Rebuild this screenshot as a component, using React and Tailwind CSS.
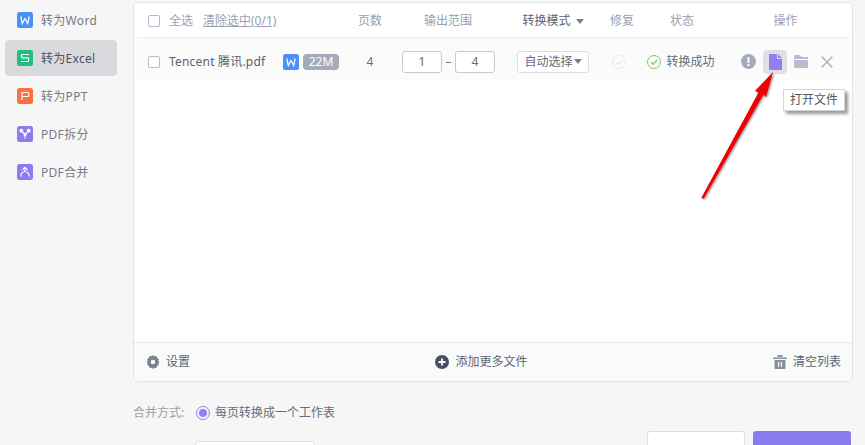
import React from 'react';

const rowCols = 'grid grid-cols-[205px_56px_100px_110px_28px_92px_121px] items-center';

function BadgeIcon({ color, children, size = 16 }) {
  return (
    <svg width={size} height={size} viewBox="0 0 16 16" className="shrink-0">
      <rect width="16" height="16" rx="2.5" fill={color} />
      <g fill="none" stroke="#fff" strokeWidth="1.2">{children}</g>
    </svg>
  );
}

const WordGlyph = <path d="M3.800 4.500 5.300 11.500 8 6.500 10.700 11.500 12.200 4.500" />;
const ExcelGlyph = <path d="M12 4.500H5.500Q4.300 4.500 4.300 6T5.500 7.800H10.500Q11.800 7.800 11.800 9.500T10.500 11.500H4" />;
const PptGlyph = <path d="M5 12V4.500h5.500Q12 4.500 12 6.500T10.500 8.500H5" />;
const SplitGlyph = (
  <>
    <path d="M5 5.500 8 8.500 11 5.500M8 8.500v4" />
    <circle cx="4.300" cy="4.600" r="1.300" fill="#fff" />
    <circle cx="11.700" cy="4.600" r="1.300" fill="#fff" />
    <circle cx="8" cy="8.500" r="1" fill="#fff" />
  </>
);
const MergeGlyph = (
  <>
    <path d="M5.500 5.800 8 3.500 10.500 5.800" />
    <path d="M8 3.500V7M3.800 12.500C3.800 9.500 6 7.500 8 7.500S12.200 9.500 12.200 12.500" />
  </>
);

const navItems = [
  { label: '转为Word', color: '#4a90f7', glyph: WordGlyph },
  { label: '转为Excel', color: '#1fbd80', glyph: ExcelGlyph, active: true },
  { label: '转为PPT', color: '#fb7043', glyph: PptGlyph },
  { label: 'PDF拆分', color: '#8b7cf0', glyph: SplitGlyph },
  { label: 'PDF合并', color: '#8b7cf0', glyph: MergeGlyph },
];

function Checkbox() {
  return <span className="w-3 h-3 rounded-[2px] border border-[#b4b8c8] bg-white shrink-0" />;
}

function Caret() {
  return <span className="w-0 h-0 border-x-[4.500px] border-x-transparent border-t-[5px] border-t-[#7c7f88]" />;
}

function RangeBox({ value }) {
  return (
    <span className="w-10 h-[22px] flex items-center justify-center rounded-[3px] border border-[#c8c9cf] bg-white text-[#666b76]">
      {value}
    </span>
  );
}

export default function App() {
  return (
    <div className="relative flex h-[445px] w-[865px] overflow-hidden bg-[#f6f6f6] text-xs text-[#666b78] font-['Noto_Sans','Noto_Sans_CJK_SC',sans-serif]">
      <aside className="w-[133px] shrink-0 pt-[2px] pl-[5px]">
        <nav className="flex flex-col gap-[2px]">
          {navItems.map((item) => (
            <div
              key={item.label}
              className={`w-[112px] h-9 flex items-center gap-2 pl-3 rounded-[4px] ${item.active ? 'bg-[#d9dade] text-[#4d515c]' : 'text-[#777b87]'}`}
            >
              <BadgeIcon color={item.color}>{item.glyph}</BadgeIcon>
              <span className="pt-[1px] tracking-[0.3px]">{item.label}</span>
            </div>
          ))}
        </nav>
      </aside>

      <main className="w-[720px] pt-[2px] shrink-0">
        <section className="h-[380px] flex flex-col rounded-[5px] border border-[#e3e3e3] bg-white overflow-hidden">
          <div className={`${rowCols} h-[35px] pt-[2px] mx-[3px] border-b border-[#ececee] text-[#9aa0b0]`}>
            <div className="flex items-center pl-[11px]">
              <Checkbox />
              <span className="ml-[9px]">全选</span>
              <span className="ml-[10px] underline">清除选中(0/1)</span>
            </div>
            <span className="text-center">页数</span>
            <span className="text-center">输出范围</span>
            <span className="flex items-center justify-center gap-[5px] text-[#5f636e]">转换模式<Caret /></span>
            <span className="text-center">修复</span>
            <span className="text-center">状态</span>
            <span className="text-center pr-[6px]">操作</span>
          </div>

          <div className={`${rowCols} h-[43px] pt-[4px] mx-[3px] bg-[#fbfbfc]`}>
            <div className="flex items-center pl-[11px]">
              <Checkbox />
              <span className="ml-[9px] w-[105px] shrink-0 whitespace-nowrap tracking-[0.2px] text-[#5c5f70]">Tencent 腾讯.pdf</span>
              <span className="ml-[9px]"><BadgeIcon color="#4a90f7">{WordGlyph}</BadgeIcon></span>
              <span className="ml-[4px] w-9 h-4 rounded-[4px] bg-[#a5abbb] text-white flex items-center justify-center">22M</span>
            </div>
            <span className="text-center text-[#6a6e78]">4</span>
            <div className="flex items-center justify-center gap-[1px] pl-[1px]">
              <RangeBox value="1" />
              <span className="w-[11px] text-center text-[#777]">–</span>
              <RangeBox value="4" />
            </div>
            <div className="flex justify-center">
              <span className="w-[72px] h-[22px] rounded-[3px] border border-[#dcdde0] bg-white flex items-center justify-center gap-[1px]">
                自动选择<Caret />
              </span>
            </div>
            <div className="flex justify-center pr-[6px]">
              <svg width="14" height="14" viewBox="0 0 14 14" fill="none" stroke="#e6e7ec" strokeWidth="1">
                <circle cx="7" cy="7" r="6.500" />
                <path d="M4 7.200 6.200 9.300 10 5" strokeWidth="1.300" />
              </svg>
            </div>
            <div className="flex items-center justify-center gap-[5px] pr-[2px]">
              <svg width="14" height="14" viewBox="0 0 14 14" fill="none" stroke="#7fc46f" strokeWidth="1">
                <circle cx="7" cy="7" r="6.500" />
                <path d="M4 7.200 6.200 9.300 10 5" strokeWidth="1.200" />
              </svg>
              <span>转换成功</span>
            </div>
            <div className="flex items-center pl-[13px]">
              <svg width="15" height="15" viewBox="0 0 15 15">
                <circle cx="7.500" cy="7.500" r="7.500" fill="#a5abbe" />
                <rect x="6.500" y="3" width="2" height="6" rx="0.500" fill="#fff" />
                <rect x="6.500" y="10" width="2" height="2" fill="#fff" />
              </svg>
              <span className="ml-[7px] w-6 h-6 rounded-[4px] bg-[#dfe0e4] flex items-center justify-center">
                <svg width="13" height="16" viewBox="0 0 13 16">
                  <path d="M0 0h8v5h5v11H0z" fill="#927df6" />
                  <path d="M9 0l4 4H9z" fill="#927df6" />
                </svg>
              </span>
              <svg width="15" height="13" viewBox="0 0 15 13" className="ml-[7px]">
                <path d="M0 0h6l1.500 2H14v2H0zM0 5h14v8H0z" fill="#b6bccd" />
              </svg>
              <svg width="12" height="12" viewBox="0 0 12 12" className="ml-[12px]" fill="none" stroke="#b6bccd" strokeWidth="1.800">
                <path d="M.7.7l10.600 10.600M11.300.7.700 11.300" />
              </svg>
            </div>
          </div>

          <div className="flex-1" />

          <footer className="h-[39px] flex items-center justify-between pl-3 pr-[11px] bg-[#f9fafa] border-t border-[#e8e8e8] text-[#5e6474]">
            <div className="flex items-center gap-[6px]">
              <svg width="14" height="14" viewBox="0 0 14 14">
                <path
                  fillRule="evenodd"
                  d="M7 0l1.400 1.300 2-.2.600 1.900 1.800.9-.5 1.900L13.500 7l-1.200 1.200.5 1.900-1.800.9-.6 1.900-2-.2L7 14l-1.400-1.300-2 .2-.6-1.900-1.800-.9.500-1.900L.5 7l1.200-1.200-.5-1.900L3 3l.6-1.900 2 .2zM7 4.700a2.300 2.300 0 1 0 0 4.600 2.300 2.300 0 0 0 0-4.600z"
                  fill="#79808f"
                />
              </svg>
              <span>设置</span>
            </div>
            <div className="flex items-center gap-[6px]">
              <svg width="14" height="14" viewBox="0 0 14 14">
                <circle cx="7" cy="7" r="7" fill="#475069" />
                <path d="M3.500 7h7M7 3.500v7" stroke="#fff" strokeWidth="1.800" />
              </svg>
              <span>添加更多文件</span>
            </div>
            <div className="flex items-center gap-[6px]">
              <svg width="14" height="14" viewBox="0 0 14 14" fill="#8a90a2">
                <path d="M0 2.500h14V4H0zM4.500 0h5v2h-5z" />
                <path fillRule="evenodd" d="M1.500 5h11v9h-11zM5 7v5h1.200V7zm2.800 0v5H9V7z" />
              </svg>
              <span>清空列表</span>
            </div>
          </footer>
        </section>

        <div className="flex items-center mt-[22px] h-[18px]">
          <span className="w-[52px] text-[#9a9da8]">合并方式:</span>
          <span className="ml-[11px] w-[14px] h-[14px] rounded-full border border-[#927df6] flex items-center justify-center">
            <span className="w-2 h-2 rounded-full bg-[#927df6]" />
          </span>
          <span className="ml-[5px]">每页转换成一个工作表</span>
        </div>

        <div className="flex items-start mt-[9px]">
          <span className="mt-[10px] ml-[62px] w-[120px] h-8 rounded-[3px] border border-[#dfdfdf] bg-white" />
          <span className="ml-[332px] w-[98px] h-8 rounded-[3px] border border-[#dfdfdf] bg-white" />
          <span className="ml-2 w-[98px] h-8 rounded-[3px] bg-[#8b7bf1]" />
        </div>
      </main>

      <div className="absolute left-[783px] top-[89px] w-[62px] h-[22px] flex items-center justify-center border border-[#d5d5d5] bg-white text-[#4f5561] shadow-[3px_3px_3px_rgba(0,0,0,0.4)]">
        打开文件
      </div>

      <svg className="absolute left-[690px] top-[60px]" width="100" height="150" viewBox="0 0 100 150">
        <defs>
          <filter id="arrow-shadow" x="-30%" y="-30%" width="160%" height="160%">
            <feDropShadow dx="1" dy="1" stdDeviation="1" floodColor="#000" floodOpacity="0.5" />
          </filter>
        </defs>
        <path d="M83 12 L76 37 L73.500 34.500 L13.500 139 L11.500 137.500 L68.500 32.500 L65 31 Z" fill="#f00000" filter="url(#arrow-shadow)" />
      </svg>
    </div>
  );
}
